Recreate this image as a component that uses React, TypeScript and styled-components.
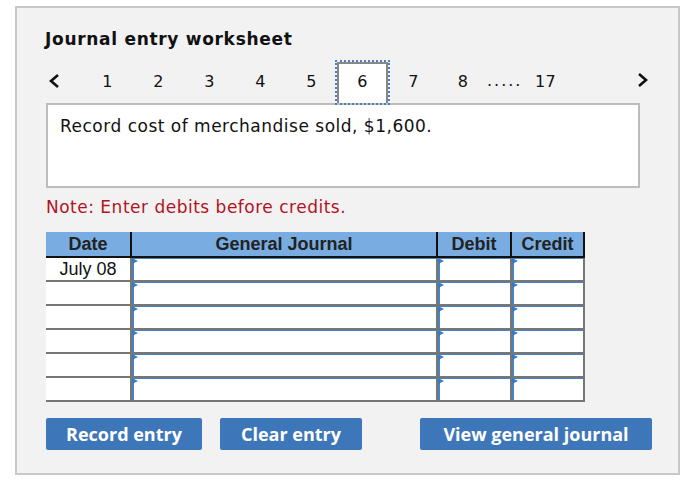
import { createGlobalStyle, styled } from 'styled-components';

const pages = ['1', '2', '3', '4', '5', '6', '7'];
const rows = ['July 08', '', '', '', '', ''];

export default function App(): JSX.Element {
  return (
    <>
      <GlobalStyle />
      <Panel>
        <Title>Journal entry worksheet</Title>
        <Nav>
          <NavArrow>
            <svg width="12" height="14" viewBox="0 0 12 14">
              <polyline points="10,1 3,7 10,13" fill="none" stroke="#111" strokeWidth="2.6" />
            </svg>
          </NavArrow>
          {pages.map((p) => (
            <Tab key={p} $w={51} $active={p === '6'}>
              {p}
            </Tab>
          ))}
          <Tab $w={48}>8</Tab>
          <Ellipsis>.....</Ellipsis>
          <Tab $w={46}>17</Tab>
          <NextArrow>
            <svg width="12" height="14" viewBox="0 0 12 14">
              <polyline points="2,1 9,7 2,13" fill="none" stroke="#111" strokeWidth="2.6" />
            </svg>
          </NextArrow>
        </Nav>
        <Prompt>Record cost of merchandise sold, $1,600.</Prompt>
        <Note>Note: Enter debits before credits.</Note>
        <JournalTable>
          <HeadRow>
            <HeadCell>Date</HeadCell>
            <HeadCell>General Journal</HeadCell>
            <HeadCell>Debit</HeadCell>
            <HeadCell>Credit</HeadCell>
          </HeadRow>
          {rows.map((date, i) => (
            <Row key={i}>
              <DateCell>{date}</DateCell>
              <EntryCell>
                <Field />
                <Flag />
              </EntryCell>
              <EntryCell>
                <Field />
                <Flag />
              </EntryCell>
              <EntryCell>
                <Field />
                <Flag />
              </EntryCell>
            </Row>
          ))}
        </JournalTable>
        <Actions>
          <ActionButton $w={156}>Record entry</ActionButton>
          <ActionButton $w={142} $gap={18}>
            Clear entry
          </ActionButton>
          <ActionButton $w={232} $gap={58}>
            View general journal
          </ActionButton>
        </Actions>
      </Panel>
    </>
  );
}

const GlobalStyle = createGlobalStyle`
  body {
    margin: 0;
    background: #ffffff;
    font-family: "DejaVu Sans", Verdana, sans-serif;
    color: #111;
  }
`;

const Panel = styled.div`
  box-sizing: border-box;
  width: 665px;
  height: 469px;
  margin: 6px 0 0 15px;
  padding: 21px 0 0 29px;
  background: #f2f2f2;
  border: 2px solid #c8c8c8;
`;

const Title = styled.h1`
  margin: 0 0 0 -1px;
  font-size: 17px;
  line-height: 20px;
  font-weight: bold;
  letter-spacing: 0.7px;
  color: #111;
`;

const Nav = styled.div`
  display: flex;
  align-items: flex-start;
  width: 603px;
  height: 41px;
  margin-top: 13px;
`;

const NavArrow = styled.div`
  width: 36px;
  padding: 11px 0 0 2px;
  box-sizing: border-box;
`;

const NextArrow = styled.div`
  margin-left: auto;
  padding-top: 10px;
`;

const Tab = styled.div<{ $w: number; $active?: boolean }>`
  position: relative;
  z-index: 1;
  box-sizing: border-box;
  width: ${(p) => p.$w}px;
  height: 41px;
  border: 2px solid transparent;
  border-bottom: none;
  text-align: center;
  font-size: 16px;
  line-height: 35px;
  letter-spacing: 0.3px;
  ${(p) =>
    p.$active &&
    `
    background: #ffffff;
    border-color: #888888;
    outline: 2px dotted #4a7fc0;
  `}
`;

const Ellipsis = styled.div`
  font-size: 16px;
  line-height: 37px;
  letter-spacing: 2px;
`;

const Prompt = styled.div`
  box-sizing: border-box;
  width: 594px;
  height: 85px;
  padding: 11px 12px;
  background: #ffffff;
  border: 2px solid #bcbcbc;
  font-size: 17px;
  line-height: 20px;
  letter-spacing: 0.5px;
`;

const Note = styled.div`
  margin-top: 9px;
  font-size: 17px;
  line-height: 20px;
  letter-spacing: 0.5px;
  color: #b3121f;
`;

const JournalTable = styled.div`
  width: 539px;
  margin-top: 15px;
  font-family: "Liberation Sans", Arial, sans-serif;
  font-size: 18px;
`;

const HeadRow = styled.div`
  display: grid;
  grid-template-columns: 86px 306px 74px 73px;
  background: #79ace0;
  border-bottom: 2px solid #111;
`;

const HeadCell = styled.div`
  height: 24px;
  line-height: 24px;
  text-align: center;
  font-weight: bold;
  color: #222;
  border-right: 2px solid #111;
`;

const Row = styled.div`
  box-sizing: border-box;
  display: grid;
  grid-template-columns: 86px 306px 74px 73px;
  height: 24px;
  border-bottom: 2px solid #767676;
`;

const DateCell = styled.div`
  background: #ffffff;
  border-right: 2px solid #767676;
  line-height: 22px;
  text-align: center;
  color: #111;
`;

const EntryCell = styled.div`
  position: relative;
  background: #ffffff;
  border-right: 2px solid #767676;
`;

const Field = styled.input`
  display: block;
  box-sizing: border-box;
  width: 100%;
  height: 100%;
  margin: 0;
  padding: 0 4px;
  border: none;
  border-left: 2px solid #4a80c4;
  border-top: 1px solid #4a80c4;
  background: #ffffff;
  font: inherit;
  outline: none;
`;

const Flag = styled.span`
  position: absolute;
  top: 0;
  left: 0;
  width: 0;
  height: 0;
  border-top: 3.5px solid transparent;
  border-bottom: 3.5px solid transparent;
  border-left: 6px solid #3d78c3;
`;

const Actions = styled.div`
  display: flex;
  margin-top: 16px;
`;

const ActionButton = styled.button<{ $w: number; $gap?: number }>`
  width: ${(p) => p.$w}px;
  height: 32px;
  margin: 0 0 0 ${(p) => p.$gap ?? 0}px;
  padding: 0;
  border: none;
  border-radius: 2px;
  background: #3e77b9;
  color: #ffffff;
  font-family: "Open Sans", sans-serif;
  font-weight: 700;
  font-size: 18px;
  line-height: 32px;
  cursor: pointer;
`;
